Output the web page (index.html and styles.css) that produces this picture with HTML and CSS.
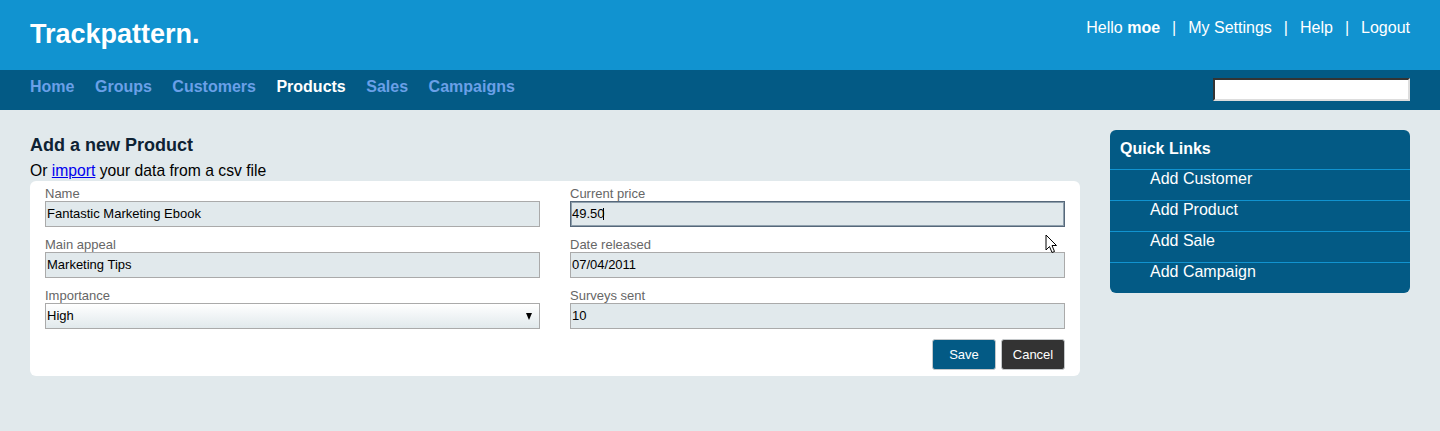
FILE: index.html
```html
<!DOCTYPE html>
<html lang="en">
<head>
<meta charset="utf-8">
<title>Trackpattern - Add a new Product</title>
<link rel="stylesheet" href="styles.css">
</head>
<body>
<header class="topbar">
  <div class="brand">Trackpattern.</div>
  <div class="account">
    <span>Hello <b>moe</b></span><span class="sep">|</span><a href="#">My Settings</a><span class="sep">|</span><a href="#">Help</a><span class="sep">|</span><a href="#">Logout</a>
  </div>
</header>
<nav class="mainnav">
  <ul class="navlinks">
    <li><a href="#">Home</a></li>
    <li><a href="#">Groups</a></li>
    <li><a href="#">Customers</a></li>
    <li><a href="#" class="active">Products</a></li>
    <li><a href="#">Sales</a></li>
    <li><a href="#">Campaigns</a></li>
  </ul>
  <input class="search" type="text">
</nav>
<main class="page">
  <section class="content">
    <h1 class="title">Add a new Product</h1>
    <p class="subtitle">Or <a href="#">import</a> your data from a csv file</p>
    <form class="card">
      <div class="fields">
        <div class="field">
          <label>Name</label>
          <input class="text" type="text" value="Fantastic Marketing Ebook">
        </div>
        <div class="field">
          <label>Current price</label>
          <div class="focuswrap">
            <input class="text focused" type="text" value="49.50">
            <span class="caret"></span>
          </div>
        </div>
        <div class="field">
          <label>Main appeal</label>
          <input class="text" type="text" value="Marketing Tips">
        </div>
        <div class="field">
          <label>Date released</label>
          <input class="text" type="text" value="07/04/2011">
        </div>
        <div class="field">
          <label>Importance</label>
          <div class="selectwrap">
            <select class="select"><option>High</option><option>Medium</option><option>Low</option></select>
            <span class="arrow"></span>
          </div>
        </div>
        <div class="field">
          <label>Surveys sent</label>
          <input class="text" type="text" value="10">
        </div>
      </div>
      <div class="actions">
        <button type="button" class="btn btn-save">Save</button>
        <button type="button" class="btn btn-cancel">Cancel</button>
      </div>
      <svg class="pointer" width="13" height="20" viewBox="0 0 13 20"><path d="M1 1 L1 16 L4.5 12.5 L7 18.5 L9.5 17.5 L7 11.5 L11.5 11.5 Z" fill="#fff" stroke="#000" stroke-width="1" stroke-linejoin="round"/></svg>
    </form>
  </section>
  <aside class="quick">
    <h2 class="quick-title">Quick Links</h2>
    <ul class="quick-list">
      <li><a href="#">Add Customer</a></li>
      <li><a href="#">Add Product</a></li>
      <li><a href="#">Add Sale</a></li>
      <li><a href="#">Add Campaign</a></li>
    </ul>
  </aside>
</main>
</body>
</html>
```

FILE: styles.css
```css
* { box-sizing: border-box; }
html, body {
  margin: 0;
  padding: 0;
}
body {
  background: #e1e9ec;
  font-family: "Liberation Sans", Arial, sans-serif;
  color: #000;
  height: 431px;
}
a { text-decoration: none; color: inherit; }

.topbar {
  background: #1193d0;
  height: 70px;
  padding: 19px 30px 0;
  display: flex;
  justify-content: space-between;
  align-items: flex-start;
}
.brand {
  color: #fff;
  font-weight: bold;
  font-size: 27px;
  line-height: 31px;
}
.account {
  color: #fff;
  font-size: 16px;
  line-height: 18px;
  display: flex;
}
.account .sep { margin: 0 12px; }

.mainnav {
  background: #035a85;
  height: 40px;
  padding: 8px 30px 0;
  display: flex;
  justify-content: space-between;
  align-items: flex-start;
}
.navlinks {
  list-style: none;
  margin: 0;
  padding: 0;
  display: flex;
  gap: 20.5px;
}
.navlinks a {
  color: #6aa0e8;
  font-weight: bold;
  font-size: 16px;
  line-height: 18px;
  display: block;
}
.navlinks a.active { color: #fff; }
.search {
  width: 197px;
  height: 23px;
  border: 2px inset #ddd;
  border-top-color: #888;
  border-left-color: #888;
  background: #fff;
  padding: 0;
  margin: 0;
}

.page {
  display: flex;
  gap: 30px;
  padding: 0 30px;
}
.content {
  flex: 1;
  padding-top: 24px;
}
.title {
  margin: 0;
  font-size: 18px;
  line-height: 22px;
  color: #0e2233;
}
.subtitle {
  margin: 6px 0 0;
  font-size: 15.7px;
  line-height: 18px;
}
.subtitle a { color: #0000ee; text-decoration: underline; }

.card {
  position: relative;
  margin-top: 1px;
  background: #fff;
  border-radius: 6px;
  padding: 5px 15px 6px;
}
.fields {
  display: grid;
  grid-template-columns: 1fr 1fr;
  column-gap: 30px;
  row-gap: 10px;
}
.field label {
  display: block;
  color: #666;
  font-size: 13px;
  line-height: 15px;
}
.text, .select {
  display: block;
  width: 100%;
  height: 26px;
  margin: 0;
  border: 1px solid #aaa;
  background: #e1e9ec;
  font-family: "Liberation Sans", Arial, sans-serif;
  font-size: 13px;
  color: #000;
  padding: 0 1px 2px;
  border-radius: 0;
  outline: none;
}
.focuswrap, .selectwrap { position: relative; }
.text.focused {
  border-color: #56687a;
  box-shadow: inset 0 0 0 1px #8fa0ad;
}
.caret {
  position: absolute;
  left: 33px;
  top: 7px;
  width: 1px;
  height: 12px;
  background: #000;
}
.select {
  appearance: none;
  -webkit-appearance: none;
  background: linear-gradient(#ffffff, #e1e9ec);
}
.arrow {
  position: absolute;
  right: 8px;
  top: 10px;
  width: 0;
  height: 0;
  border-left: 3.5px solid transparent;
  border-right: 3.5px solid transparent;
  border-top: 7px solid #000;
}
.actions {
  display: flex;
  justify-content: flex-end;
  gap: 5px;
  margin-top: 10px;
}
.btn {
  width: 64px;
  height: 31px;
  border: 1px solid #c4c8ca;
  border-radius: 3px;
  color: #fff;
  font-family: "Liberation Sans", Arial, sans-serif;
  font-size: 13px;
  padding: 0;
  margin: 0;
}
.btn-save { background: #035a85; }
.btn-cancel { background: #333; }
.pointer {
  position: absolute;
  left: 1015px;
  top: 53px;
}

.quick {
  width: 300px;
  flex: none;
  margin-top: 20px;
  background: #035a85;
  border-radius: 6px;
  color: #fff;
  align-self: flex-start;
}
.quick-title {
  margin: 0;
  padding: 10px 10px 11px;
  font-size: 16px;
  line-height: 18px;
}
.quick-list {
  list-style: none;
  margin: 0;
  padding: 0;
}
.quick-list li {
  border-top: 1px solid #1193d0;
  padding: 0 10px 12px 40px;
  font-size: 16px;
  line-height: 18px;
}
```
